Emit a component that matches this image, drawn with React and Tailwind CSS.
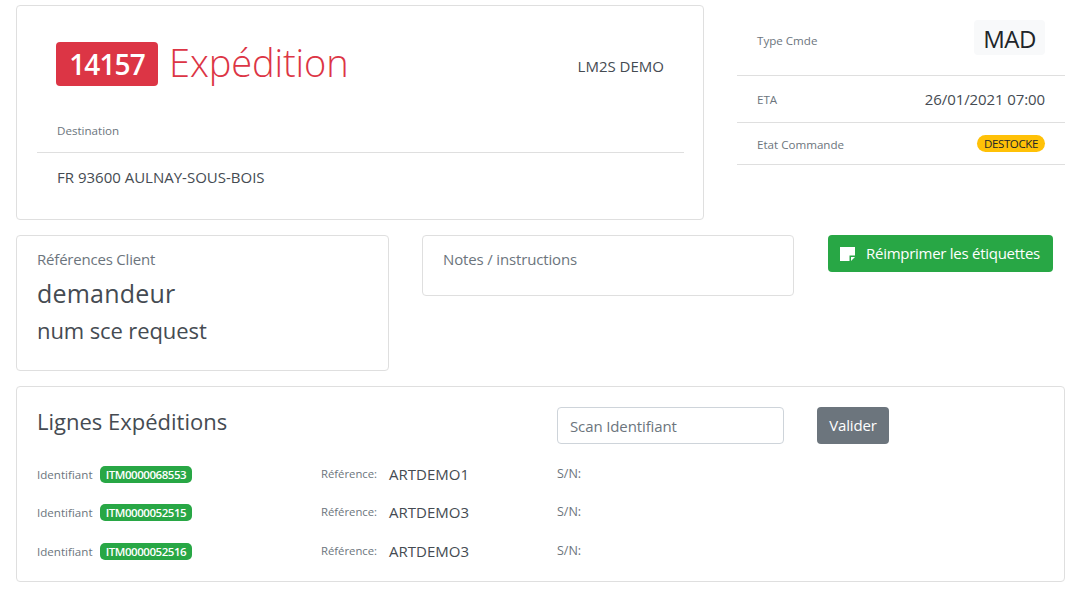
import React from 'react';

const lines = [
  { id: 'ITM0000068553', ref: 'ARTDEMO1' },
  { id: 'ITM0000052515', ref: 'ARTDEMO3' },
  { id: 'ITM0000052516', ref: 'ARTDEMO3' },
];

const font = 'font-["Open_Sans","Noto_Sans",sans-serif]';

function Card({ className, children }) {
  return <div className={`bg-white border border-[#dfdfdf] rounded-[4px] ${className}`}>{children}</div>;
}

export default function App() {
  return (
    <div className={`${font} w-[1084px] h-[593px] overflow-hidden bg-white text-[#454b52] pl-4 pt-[5px]`}>
      <div className="flex">
        <Card className="w-[688px] h-[215px] pt-9 px-5">
          <div className="flex items-center pl-[19px] h-11">
            <span className="w-[102px] h-11 rounded-[4px] bg-[#dc3545] text-white text-[28px] font-semibold tracking-[-0.9px] flex items-center justify-center">14157</span>
            <span className="ml-[11px] -mt-[4px] text-[#dc3545] text-[38px] font-light tracking-[-0.1px] leading-none">Expédition</span>
            <span className="ml-auto mr-[19px] mt-[4px] text-[15px]">LM2S DEMO</span>
          </div>
          <div className="mt-[37px] pl-5 pb-[14px] text-[11.6px] text-[#6c757d] leading-[15px] border-b border-[#dfdfdf] -mr-[1px]">Destination</div>
          <div className="mt-[14px] pl-5 text-[15px] leading-5">FR 93600 AULNAY-SOUS-BOIS</div>
        </Card>
        <div className="ml-[33px] w-[328px]">
          <div className="h-[71px] flex items-start justify-between px-5 border-b border-[#dfdfdf]">
            <span className="mt-[28px] text-[11.6px] leading-4 text-[#6c757d]">Type Cmde</span>
            <span className="mt-[15px] pt-[2px] w-[71px] h-[35px] bg-[#f8f9fa] rounded-[4px] text-[#212529] text-[24px] tracking-[-0.5px] flex items-center justify-center">MAD</span>
          </div>
          <div className="h-[47px] flex items-center justify-between px-5 border-b border-[#dfdfdf]">
            <span className="mt-[2px] text-[11.6px] text-[#6c757d]">ETA</span>
            <span className="text-[15px] tracking-[-0.1px]">26/01/2021 07:00</span>
          </div>
          <div className="h-[42px] flex items-center justify-between px-5 border-b border-[#dfdfdf]">
            <span className="mt-[2px] text-[11.6px] text-[#6c757d]">Etat Commande</span>
            <span className="w-[68px] h-[17px] rounded-full bg-[#ffc107] text-[#212529] text-[11.5px] font-medium tracking-[-0.4px] flex items-center justify-center">DESTOCKE</span>
          </div>
        </div>
      </div>

      <div className="flex items-start mt-[15px]">
        <Card className="w-[373px] h-[136px] px-5 pt-[13px]">
          <div className="text-[15px] text-[#6c757d] tracking-[-0.2px] leading-5">Références Client</div>
          <div className="text-[25px] tracking-[0.2px] leading-[30px] mt-[9px]">demandeur</div>
          <div className="text-[22px] tracking-[-0.1px] leading-[28px] mt-[8px]">num sce request</div>
        </Card>
        <Card className="ml-[33px] w-[372px] h-[61px] px-5 pt-[13px]">
          <div className="text-[15px] text-[#6c757d] tracking-[-0.15px] leading-5">Notes / instructions</div>
        </Card>
        <button className="ml-[34px] w-[225px] h-[37px] rounded-[4px] bg-[#28a745] text-white text-[15px] tracking-[-0.27px] flex items-center pl-[12px]">
          <svg width="15" height="14" viewBox="0 0 15 14" className="mr-[11px]">
            <path d="M0 0h15v8.500h-5.500v5.500H0z" fill="#fff" />
            <path d="M11 10h4l-4 4z" fill="#fff" />
          </svg>
          Réimprimer les étiquettes
        </button>
      </div>

      <Card className="mt-[15px] w-[1049px] h-[196px] px-5">
        <div className="flex items-start pt-5">
          <div className="w-[520px] -mt-[1px] text-[22px] leading-[30px]">Lignes Expéditions</div>
          <input
            readOnly
            placeholder="Scan Identifiant"
            className="w-[227px] h-[37px] border border-[#ced4da] rounded-[4px] px-3 text-[15px] tracking-[-0.12px] placeholder:text-[#6c757d] outline-none"
          />
          <button className="ml-[33px] w-[72px] h-[37px] rounded-[4px] bg-[#6c757d] text-white text-[15px] tracking-[-0.15px]">Valider</button>
        </div>
        <div className="mt-[11px]">
          {lines.map((l, i) => (
            <div key={i} className="flex items-center h-[38.500px] text-[11.3px] text-[#6c757d]">
              <span className="w-[63px] text-[11.6px]">Identifiant</span>
              <span className="w-[92px] h-[17px] rounded-[5px] bg-[#28a745] text-white text-[11.5px] font-semibold tracking-[-0.45px] flex items-center justify-center">{l.id}</span>
              <span className="ml-[129px] w-[68px]">Référence:</span>
              <span className="w-[168px] -mt-[1px] text-[15px] text-[#454b52]">{l.ref}</span>
              <span className="text-[12.5px]">S/N:</span>
            </div>
          ))}
        </div>
      </Card>
    </div>
  );
}
